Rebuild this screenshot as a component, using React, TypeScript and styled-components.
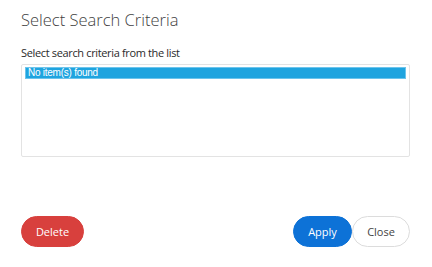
import React from "react";
import styled, { createGlobalStyle } from "styled-components";

const Global = createGlobalStyle`
  html, body { margin: 0; padding: 0; background: #fff; }
  body { font-family: "Open Sans", "Noto Sans", sans-serif; }
`;

const Dialog = styled.div`
  width: 432px;
  height: 267px;
  box-sizing: border-box;
  padding: 8px 22px 20px 21px;
  display: flex;
  flex-direction: column;
`;

const Title = styled.h1`
  margin: 0;
  font-family: "Open Sans", "Noto Sans", sans-serif;
  font-size: 16.5px;
  font-weight: 300;
  color: #3f3f3f;
  line-height: 24px;
`;

const Label = styled.div`
  margin-top: 13px;
  font-size: 11px;
  letter-spacing: -0.35px;
  color: #2a2a2a;
  line-height: 16px;
`;

const ListBox = styled.div`
  margin-top: 3px;
  height: 93px;
  box-sizing: border-box;
  border: 1px solid #e3e3e3;
  border-radius: 2px;
  padding: 3px 4px;
`;

const Item = styled.div<{ $selected?: boolean }>`
  height: 10px;
  line-height: 10px;
  font-family: "Liberation Sans", Arial, sans-serif;
  font-size: 10px;
  letter-spacing: -0.25px;
  padding: 0 2px;
  color: ${(p) => (p.$selected ? "#fff" : "#222")};
  background: ${(p) => (p.$selected ? "#1fa4df" : "transparent")};
  outline: ${(p) => (p.$selected ? "1px solid #6cc4ec" : "none")};
`;

const Footer = styled.div`
  margin-top: auto;
  display: flex;
  align-items: center;
`;

const Spacer = styled.div`
  flex: 1;
`;

const Button = styled.button<{ $variant: "danger" | "primary" | "default" }>`
  height: 31px;
  border-radius: 16px;
  font-family: "Open Sans", "Noto Sans", sans-serif;
  font-size: 11px;
  padding: 0;
  box-sizing: border-box;
  cursor: pointer;
  background: ${(p) =>
    p.$variant === "danger" ? "#d8403d" : p.$variant === "primary" ? "#0d72d7" : "#fff"};
  color: ${(p) => (p.$variant === "default" ? "#444" : "#fff")};
  border: 1px solid
    ${(p) =>
      p.$variant === "danger" ? "#d8403d" : p.$variant === "primary" ? "#0d72d7" : "#dcdcdc"};
`;

const DeleteButton = styled(Button)`
  width: 63px;
`;
const ApplyButton = styled(Button)`
  width: 59px;
`;
const CloseButton = styled(Button)`
  width: 58px;
`;

export default function App() {
  return (
    <>
      <Global />
      <Dialog>
        <Title>Select Search Criteria</Title>
        <Label>Select search criteria from the list</Label>
        <ListBox>
          <Item $selected>No item(s) found</Item>
        </ListBox>
        <Footer>
          <DeleteButton $variant="danger">Delete</DeleteButton>
          <Spacer />
          <ApplyButton $variant="primary">Apply</ApplyButton>
          <CloseButton $variant="default">Close</CloseButton>
        </Footer>
      </Dialog>
    </>
  );
}
